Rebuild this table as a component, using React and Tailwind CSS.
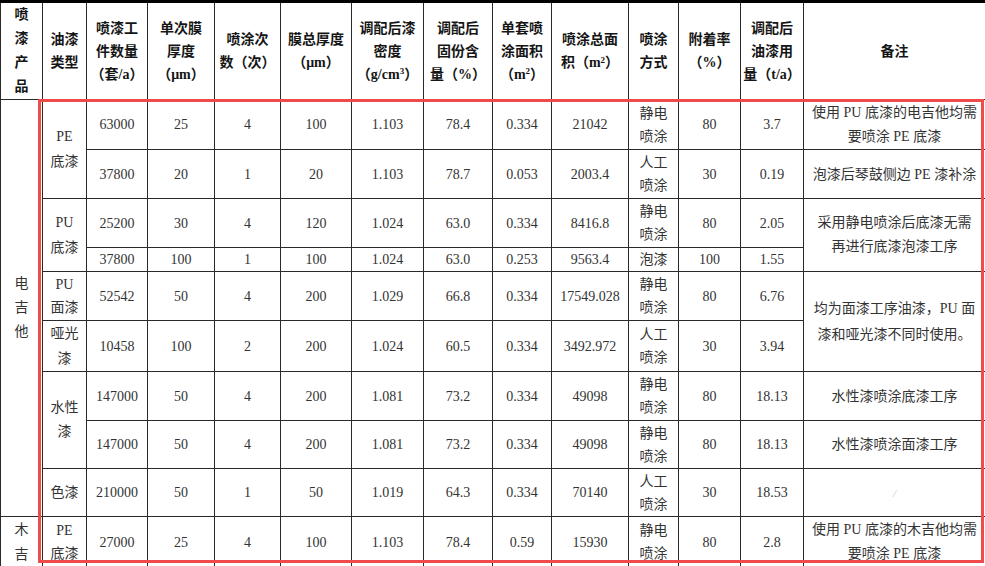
import React from "react";

const B = "border border-[#2a2a2a]";

function H({ lines, className = "" }) {
  return (
    <th className={`${B} p-0 align-middle text-center font-bold text-[14px] leading-[23px] text-[#151515] ${className}`}>
      {lines.map((l, i) => (
        <div key={i} className="whitespace-nowrap">{l}</div>
      ))}
    </th>
  );
}

function C({ children, rowSpan, className = "" }) {
  return (
    <td rowSpan={rowSpan} className={`${B} p-0 align-middle text-center text-[14px] text-[#333] ${className}`}>
      {children}
    </td>
  );
}

function Lines({ items, lh = "leading-[23px]" }) {
  return (
    <div className={lh}>
      {items.map((l, i) => (
        <div key={i} className="whitespace-nowrap">{l}</div>
      ))}
    </div>
  );
}

function Row({ d, m, last }) {
  const extra = last ? "border-b-[3px] border-b-black" : "";
  return (
    <>
      <C className={extra}>{d[0]}</C>
      <C className={extra}>{d[1]}</C>
      <C className={extra}>{d[2]}</C>
      <C className={extra}>{d[3]}</C>
      <C className={extra}>{d[4]}</C>
      <C className={extra}>{d[5]}</C>
      <C className={extra}>{d[6]}</C>
      <C className={extra}>{d[7]}</C>
      <C className={extra}><Lines items={m} /></C>
      <C className={extra}>{d[8]}</C>
      <C className={extra}>{d[9]}</C>
    </>
  );
}

export default function App() {
  return (
    <div
      className="relative w-[985px] h-[566px] overflow-hidden bg-white"
      style={{ fontFamily: '"Liberation Serif", "Noto Sans CJK SC", serif' }}
    >
      <table className="table-fixed border-collapse w-[985px]">
        <colgroup>
          <col className="w-[42px]" />
          <col className="w-[44px]" />
          <col className="w-[61px]" />
          <col className="w-[67px]" />
          <col className="w-[66px]" />
          <col className="w-[71px]" />
          <col className="w-[72px]" />
          <col className="w-[69px]" />
          <col className="w-[59px]" />
          <col className="w-[77px]" />
          <col className="w-[50px]" />
          <col className="w-[62px]" />
          <col className="w-[63px]" />
          <col className="w-[182px]" />
        </colgroup>
        <thead>
          <tr className="h-[98px] [&>th]:border-t-[3px] [&>th]:border-t-black">
            <th className={`${B} p-0 align-middle text-center font-bold text-[14px] leading-[24px] text-[#151515]`}>
              <div>喷</div><div>漆</div><div>产</div><div>品</div>
            </th>
            <H lines={["油漆", "类型"]} />
            <H lines={["喷漆工", "件数量", "（套/a）"]} />
            <H lines={["单次膜", "厚度", "（μm）"]} />
            <H lines={["喷涂次", "数（次）"]} />
            <H lines={["膜总厚度", "（μm）"]} />
            <H lines={["调配后漆", "密度", <span>（g/cm<sup className="text-[9px]">3</sup>）</span>]} />
            <H lines={["调配后", "固份含", "量（%）"]} />
            <H lines={["单套喷", "涂面积", <span>（m<sup className="text-[9px]">2</sup>）</span>]} />
            <H lines={["喷涂总面", <span>积（m<sup className="text-[9px]">2</sup>）</span>]} />
            <H lines={["喷涂", "方式"]} />
            <H lines={["附着率", "（%）"]} />
            <H lines={["调配后", "油漆用", "量（t/a）"]} />
            <H lines={["备注"]} />
          </tr>
        </thead>
        <tbody>
          <tr className="h-[50px]">
            <C rowSpan={9}>
              <div className="leading-[24px]"><div>电</div><div>吉</div><div>他</div></div>
            </C>
            <C rowSpan={2}><Lines items={["PE", "底漆"]} lh="leading-[25px]" /></C>
            <Row d={["63000", "25", "4", "100", "1.103", "78.4", "0.334", "21042", "80", "3.7"]} m={["静电", "喷涂"]} />
            <C><Lines items={["使用 PU 底漆的电吉他均需", "要喷涂 PE 底漆"]} lh="leading-[24px]" /></C>
          </tr>
          <tr className="h-[49px]">
            <Row d={["37800", "20", "1", "20", "1.103", "78.7", "0.053", "2003.4", "30", "0.19"]} m={["人工", "喷涂"]} />
            <C><span className="whitespace-nowrap">泡漆后琴鼓侧边 PE 漆补涂</span></C>
          </tr>
          <tr className="h-[49px]">
            <C rowSpan={2}><Lines items={["PU", "底漆"]} lh="leading-[25px]" /></C>
            <Row d={["25200", "30", "4", "120", "1.024", "63.0", "0.334", "8416.8", "80", "2.05"]} m={["静电", "喷涂"]} />
            <C rowSpan={2}><Lines items={["采用静电喷涂后底漆无需", "再进行底漆泡漆工序"]} lh="leading-[24px]" /></C>
          </tr>
          <tr className="h-[24px]">
            <Row d={["37800", "100", "1", "100", "1.024", "63.0", "0.253", "9563.4", "100", "1.55"]} m={["泡漆"]} />
          </tr>
          <tr className="h-[49px]">
            <C><Lines items={["PU", "面漆"]} lh="leading-[23px]" /></C>
            <Row d={["52542", "50", "4", "200", "1.029", "66.8", "0.334", "17549.028", "80", "6.76"]} m={["静电", "喷涂"]} />
            <C rowSpan={2}><Lines items={["均为面漆工序油漆，PU 面", "漆和哑光漆不同时使用。"]} lh="leading-[26px]" /></C>
          </tr>
          <tr className="h-[49px]">
            <C><Lines items={["哑光", "漆"]} lh="leading-[25px]" /></C>
            <Row d={["10458", "100", "2", "200", "1.024", "60.5", "0.334", "3492.972", "30", "3.94"]} m={["人工", "喷涂"]} />
          </tr>
          <tr className="h-[49px]">
            <C rowSpan={2}><Lines items={["水性", "漆"]} lh="leading-[24px]" /></C>
            <Row d={["147000", "50", "4", "200", "1.081", "73.2", "0.334", "49098", "80", "18.13"]} m={["静电", "喷涂"]} />
            <C>水性漆喷涂底漆工序</C>
          </tr>
          <tr className="h-[48px]">
            <Row d={["147000", "50", "4", "200", "1.081", "73.2", "0.334", "49098", "80", "18.13"]} m={["静电", "喷涂"]} />
            <C>水性漆喷涂面漆工序</C>
          </tr>
          <tr className="h-[48px]">
            <C>色漆</C>
            <Row d={["210000", "50", "1", "50", "1.019", "64.3", "0.334", "70140", "30", "18.53"]} m={["人工", "喷涂"]} />
            <C><span className="text-[11px] text-[#c8c8c8] italic">/</span></C>
          </tr>
          <tr className="h-[47px]">
            <C className="border-b-[3px] border-b-black">
              <div className="leading-[25px]"><div>木</div><div>吉</div></div>
            </C>
            <C className="border-b-[3px] border-b-black"><Lines items={["PE", "底漆"]} lh="leading-[23px]" /></C>
            <Row last d={["27000", "25", "4", "100", "1.103", "78.4", "0.59", "15930", "80", "2.8"]} m={["静电", "喷涂"]} />
            <C className="border-b-[3px] border-b-black"><Lines items={["使用 PU 底漆的木吉他均需", "要喷涂 PE 底漆"]} lh="leading-[24px]" /></C>
          </tr>
        </tbody>
      </table>
      <div className="absolute left-[38px] top-[99px] w-[946px] h-[464px] border-[3px] border-[#ef4b4b] pointer-events-none" />
    </div>
  );
}
